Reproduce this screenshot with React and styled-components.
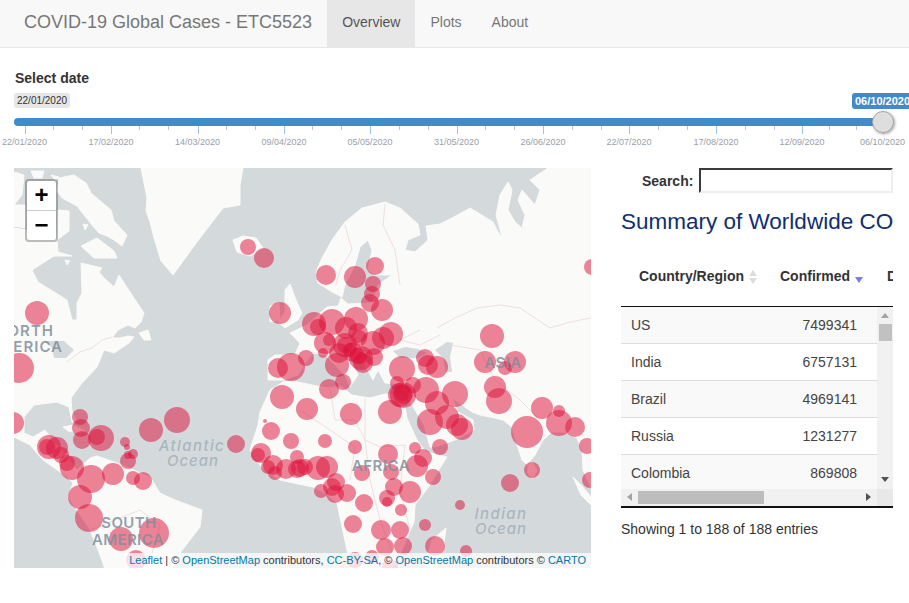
import React from "react";
import styled, { createGlobalStyle } from "styled-components";

const Global = createGlobalStyle`
  html, body { margin: 0; padding: 0; overflow: hidden; background: #fff; }
  body { font-family: "Liberation Sans", Arial, sans-serif; font-size: 14px; color: #333; }
`;

const Page = styled.div`width: 909px; height: 603px; overflow: hidden;`;

const Navbar = styled.nav`
  height: 47px; display: flex; background: #f8f8f8; border-bottom: 1px solid #e7e7e7; padding-left: 24px;
`;
const Brand = styled.div`font-size: 18px; line-height: 44px; color: #777; margin-right: 15px; white-space: nowrap;`;
const NavItem = styled.a`
  padding: 0 15px; line-height: 44px; font-size: 14px;
  color: ${p => (p.$active ? "#555" : "#777")};
  background: ${p => (p.$active ? "#e7e7e7" : "transparent")};
`;

const SliderBlock = styled.section`padding: 22px 0 0 14px;`;
const SliderLabel = styled.div`font-weight: 700; font-size: 14px; line-height: 16px; margin-left: 1px; color: #333;`;
const SliderBox = styled.div`position: relative; height: 76px; width: 895px;`;
const Bubble = styled.span`
  position: absolute; top: 7px; border-radius: 3px; white-space: nowrap; height: 15px; line-height: 15px;
  ${p => p.$max
    ? "left: 838px; background: #428bca; color: #fff; font-weight: 700; font-size: 11px; padding: 0 3px; height: 16px; line-height: 16px;"
    : "left: 0; background: #e6e6e6; color: #333; font-size: 10px; padding: 0 3px;"}
`;
const Track = styled.div`position: absolute; left: 0; top: 32px; width: 869px; height: 8px; background: #428bca; border-radius: 4px 0 0 4px;`;
const Handle = styled.div`
  position: absolute; left: 858px; top: 25px; width: 22px; height: 22px; box-sizing: border-box;
  border-radius: 50%; background: #dedede; border: 1px solid #aaa; box-shadow: 1px 1px 3px rgba(0,0,0,.35);
`;
const Tick = styled.i`
  position: absolute; top: 40px; width: 1px; height: ${p => (p.$major ? 8 : 4)}px;
  background: ${p => (p.$major ? "#9cc4e6" : "#c4c7ca")};
`;
const TickLabel = styled.span`
  position: absolute; top: 50px; width: 60px; margin-left: -30px; text-align: center; font-size: 9px; line-height: 12px; color: #99a0a6;
`;

const Content = styled.main`display: flex; padding: 6px 0 0 14px;`;
const MapBox = styled.div`position: relative; width: 577px; height: 400px; overflow: hidden; background: #d4dadc; flex: none;`;
const MapSvg = styled.svg`display: block;`;
const ZoomBar = styled.div`
  position: absolute; left: 11px; top: 11px; width: 29px; border: 2px solid rgba(0,0,0,.25); border-radius: 4px;
  background: #fff; background-clip: padding-box;
`;
const ZoomBtn = styled.div`
  height: 29px; line-height: 28px; text-align: center; font-size: 24px; font-weight: 700; color: #000;
  font-family: "Liberation Sans", sans-serif;
  &:first-child { border-bottom: 1px solid #ccc; }
`;
const Attribution = styled.div`
  position: absolute; right: 0; bottom: 0; height: 15px; padding: 0 5px; line-height: 15px; font-size: 11px; color: #333;
  background: rgba(255,255,255,.75); white-space: nowrap;
`;
const MapLink = styled.a`color: #0078a8;`;
const MapLabel = styled.text`
  font-family: Inter, "Open Sans", sans-serif; font-size: ${p => p.$size || 15}px;
  font-weight: ${p => (p.$italic ? 500 : 600)};
  fill: ${p => p.$fill || "#7f8f9c"}; letter-spacing: ${p => p.$ls ?? 1}px;
  font-style: ${p => (p.$italic ? "italic" : "normal")};
  fill-opacity: .85;
`;

const Side = styled.aside`width: 272px; margin-left: 30px; flex: none;`;
const SearchRow = styled.label`display: flex; align-items: center; height: 25px; padding-left: 21px; font-weight: 700; gap: 6px;`;
const SearchInput = styled.input`
  width: 194px; height: 25px; box-sizing: border-box; padding: 0; border: 2px inset #999; background: #fff;
  border-color: #8f8f8f #eee #eee #8f8f8f;
`;
const Title = styled.h3`
  margin: 15px 0 0; font-size: 22.5px; font-weight: 400; line-height: 28px; color: #0f2f70; white-space: nowrap; overflow: hidden;
`;
const HeaderTable = styled.table`
  margin-top: 10px; table-layout: fixed; width: 292px; border-collapse: collapse; 
`;
const TableClip = styled.div`width: 272px; overflow: hidden; border-bottom: 1px solid #111;`;
const Th = styled.th`
  height: 60px; padding: 0 0 0 ${p => p.$pad}px; text-align: left; font-size: 14px; font-weight: 700; color: #333; white-space: nowrap;
  box-sizing: border-box;
`;
const SortPair = styled.svg`display: inline-block; vertical-align: -3px; margin-left: ${p => p.$ml}px;`;
const ScrollGrid = styled.div`
  display: grid; grid-template-columns: 256px 16px; grid-template-rows: 182px 17px; border-bottom: 2px solid #111; width: 272px;
`;
const BodyClip = styled.div`overflow: hidden; background: #fff;`;
const BodyTable = styled.table`table-layout: fixed; width: 256px; border-collapse: collapse;`;
const Row = styled.tr`
  background: ${p => (p.$odd ? "#f9f9f9" : "#fff")};
  &:first-child td { height: 36px; }
`;
const Td = styled.td`
  height: 37px; padding: 0 ${p => (p.$num ? "20px" : "10px")} 0 10px; box-sizing: border-box; border-bottom: 1px solid #ddd;
  font-size: 14px; color: #444; text-align: ${p => (p.$num ? "right" : "left")};
`;
const VBar = styled.div`position: relative; background: #f1f1f1;`;
const HBar = styled.div`position: relative; background: #f1f1f1;`;
const Corner = styled.div`background: #e8e8e8;`;
const VThumb = styled.div`position: absolute; left: 2px; top: 17px; width: 13px; height: 17px; background: #c1c1c1;`;
const HThumb = styled.div`position: absolute; left: 17px; top: 2px; width: 126px; height: 13px; background: #bdbdbd;`;
const Arrow = styled.svg`position: absolute; left: ${p => p.$x}px; top: ${p => p.$y}px;`;
const Footer = styled.div`margin-top: 13px; font-size: 14px; line-height: 16px; color: #333;`;

const majors = [
  [10.5, "22/01/2020"], [97, "17/02/2020"], [183.5, "14/03/2020"], [270, "09/04/2020"], [356, "05/05/2020"],
  [442.5, "31/05/2020"], [529, "26/06/2020"], [615, "22/07/2020"], [702, "17/08/2020"], [788, "12/09/2020"], [868.5, "06/10/2020"],
];
const minors = [39, 68, 125, 154, 212, 241, 298, 327, 385, 414, 471, 500, 558, 587, 644, 673, 731, 760, 815, 842];

const land = [
  "-10,228 14,228 40,232 57,240 58,252 72,256 54,256 32,270 38,282 46,287 67,300 72,320 77,320 77,303 82,293 81,263 102,268 99,272 104,278 114,287 119,275 130,292 144,313 141,322 135,328 128,325 118,330 112,338 120,338 128,336 134,337 129,343 114,353 104,350 97,367 82,383 71,398 72,412 76,420 72,422 69,407 57,402 34,405 24,417 24,433 33,437 45,430 50,437 53,443 60,448 77,470 90,458 97,456 117,463 150,477 160,493 175,500 202,510 200,527 180,553 172,568 170,575 107,575 100,555 90,530 68,497 73,483 67,477 53,467 43,460 30,445 14,437 -10,430",
  "59,178 74,175 86,183 91,193 111,210 114,221 127,235 122,246 114,240 107,236 99,233 92,225 77,206 62,198 57,191",
  "81,246 97,238 114,251 117,258 94,258",
  "57,240 58,210 69,211 69,231",
  "83,224 88,225 85,230",
  "14,172 24,175 22,195 14,205",
  "31,171 44,171 42,178 34,178",
  "51,175 59,177 55,180",
  "14,205 25,205 25,228 14,226",
  "65,260 70,261 67,265",
  "141,168 243,168 240,185 240,205 223,208 210,225 197,242 173,275 161,261 154,238 150,222 146,211 147,198",
  "233,240 243,236 256,238 263,248 250,256 237,252",
  "285,290 290,284 296,300 302,313 298,320 285,328 278,322 285,312",
  "270,306 279,303 280,320 270,322",
  "139,333 148,330 151,340 144,340",
  "63,427 73,425 85,431 78,433 68,431",
  "318,283 316,272 322,258 332,240 345,222 362,208 385,202 400,208 418,224 420,235 408,240 405,250 415,252 428,240 426,226 440,224 452,218 470,208 480,214 493,222 498,232 502,237 496,215 500,195 508,182 512,190 508,210 515,222 522,228 525,215 518,200 522,190 535,205 540,190 530,180 545,170 548,168 600,168 600,490 591,488 583,470 582,450 577,438 565,432 552,432 543,440 535,455 527,465 522,460 517,445 512,427 503,420 495,418 480,415 472,412 462,405 452,398 458,412 473,420 474,430 455,440 435,447 430,447 424,425 412,405 405,393 403,385 385,383 378,370 373,380 365,365 357,358 345,345 358,375 350,387 345,375 330,360 325,355 313,353 305,363 298,375 283,380 268,380 268,360 275,355 295,355 300,343 290,333 307,325 327,307 338,306 341,298 348,304 372,303 378,285 392,275 375,275 368,270 372,250 368,240 360,247 355,265 345,285 342,297 332,292",
  "260,412 270,390 283,382 293,381 312,385 328,388 340,386 352,395 370,398 385,394 403,395 407,418 417,440 426,452 447,457 440,468 430,485 415,505 414,522 402,550 393,568 393,575 355,575 348,555 342,527 337,503 325,493 313,487 298,484 280,480 262,468 250,450 258,425",
  "573,477 582,486 591,497 591,505 581,495",
  "528,466 532,462 537,470 533,478 528,474",
  "446,528 442,560 432,572 426,560 432,540",
];
const water = [
  "393,351 405,347 418,349 427,353 418,358 400,358",
  "435,350 447,342 453,343 450,357 452,372 446,372 443,358",
  "44,341 64,341 74,350 66,358 54,358 52,348",
];
const borders = [
  "67,362 80,352 92,348 102,340 112,337",
  "437,328 455,318 477,308 500,305 520,308 535,318 550,328 570,322 591,318",
  "345,225 352,250 340,270 336,285",
  "385,204 383,225 395,250 400,285",
  "330,388 335,420 355,420 365,440 380,447 405,445",
  "300,410 330,430 355,447 350,480",
  "365,398 365,440 370,480 380,520 395,560",
  "405,445 400,490 410,530",
  "90,530 115,520 140,510 160,525 150,560",
  "450,345 480,350 495,380 520,400 540,420",
  "420,330 400,340 420,345 440,335",
];
const circles = [
  [248,247,8],[264,258,10],[280,313,11],[37,313,12],[19,368,15],[13,423,11],[278,368,10],[291,367,14],
  [326,275,10],[355,277,11],[375,266,9],[373,284,8],[372,294,8],[370,303,9],[382,310,11],[314,324,12],[332,322,13],[356,319,12],[318,327,8],[346,328,11],[358,333,10],[391,334,12],[383,338,11],[373,343,12],[325,343,11],[329,340,6],[359,338,8],[345,345,12],[339,353,10],[323,353,5],[353,352,10],[361,358,12],[374,357,9],[363,363,10],[337,365,12],[306,358,8],[492,336,12],[425,358,9],[402,369,13],[428,365,10],[437,367,11],[485,362,11],[515,362,11],[505,368,7],[592,267,8],
  [345,345,8],[350,350,7],[358,356,8],[361,358,6],[403,394,10],[402,393,8],
  [329,389,10],[343,382,8],[307,409,11],[351,414,11],[390,412,12],[397,383,7],[403,395,13],[400,395,12],[413,385,8],[426,390,13],[455,394,13],[437,403,12],[430,422,13],[447,417,12],[457,425,11],[462,429,11],[495,387,11],[499,401,13],[542,408,11],[559,411,6],[527,432,16],[559,423,13],[575,427,10],[587,446,8],[325,441,7],[355,447,7],[388,454,10],[415,448,6],[440,447,8],[423,458,9],[417,466,11],[391,472,8],[362,473,8],[433,477,8],[318,468,12],[327,467,11],[305,467,8],[300,468,9],[336,482,9],[332,487,9],[321,491,7],[335,494,9],[347,493,9],[364,503,9],[394,487,9],[410,492,11],[387,498,8],[387,502,5],[401,510,6],[353,524,9],[381,530,10],[400,530,9],[385,547,9],[403,546,9],[435,546,10],[425,525,6],[460,505,5],[466,551,6],[510,483,9],[532,470,8],[590,480,8],[355,560,8],[390,567,8],[372,557,7],
  [80,417,8],[81,428,9],[82,440,9],[101,438,13],[97,437,8],[151,430,12],[177,420,13],[236,444,9],[125,442,5],[127,447,3],[133,454,5],[128,455,4],[128,461,8],[271,431,9],[265,421,2],[291,441,8],[261,453,10],[258,455,7],[49,447,12],[57,448,11],[47,447,8],[61,455,8],[67,463,8],[72,468,12],[91,479,14],[113,474,11],[133,478,7],[143,481,9],[80,497,12],[89,518,14],[121,539,12],[154,533,15],[136,560,10],[273,465,10],[268,467,7],[275,473,7],[286,469,10],[297,469,9],[297,457,7],[282,397,12],
];
const rows = [["US", "7499341"], ["India", "6757131"], ["Brazil", "4969141"], ["Russia", "1231277"], ["Colombia", "869808"]];

const WorldMap = () => (
  <MapSvg width="577" height="400" viewBox="14 168 577 400">
    {land.map((p, i) => <polygon key={i} points={p} fill="#fafaf8" stroke="#fafaf8" strokeWidth="1" strokeLinejoin="round" />)}
    {water.map((p, i) => <polygon key={i} points={p} fill="#d4dadc" />)}
    {borders.map((p, i) => <polyline key={i} points={p} fill="none" stroke="#f0dfe0" strokeWidth="1" />)}
    {circles.map(([x, y, r], i) => <circle key={i} cx={x} cy={y} r={r} fill="#dc143c" fillOpacity=".52" />)}
    <MapLabel x="54" y="336" textAnchor="end">NORTH</MapLabel>
    <MapLabel x="63" y="352" textAnchor="end">AMERICA</MapLabel>
    <MapLabel x="129" y="528" textAnchor="middle" $ls={0.4}>SOUTH</MapLabel>
    <MapLabel x="128" y="545" textAnchor="middle" $ls={0.4}>AMERICA</MapLabel>
    <MapLabel x="381" y="471" textAnchor="middle" $ls={0.5}>AFRICA</MapLabel>
    <MapLabel x="503" y="368" textAnchor="middle" $ls={0.5}>ASIA</MapLabel>
    <MapLabel x="192" y="451" textAnchor="middle" $italic $fill="#a3afb7" $ls={1.4}>Atlantic</MapLabel>
    <MapLabel x="193" y="466" textAnchor="middle" $fill="#a3afb7" $ls={1} $italic>Ocean</MapLabel>
    <MapLabel x="501" y="519" textAnchor="middle" $fill="#a3afb7" $ls={1.4} $italic>Indian</MapLabel>
    <MapLabel x="501" y="534" textAnchor="middle" $fill="#a3afb7" $ls={1} $italic>Ocean</MapLabel>
  </MapSvg>
);

const GreySort = () => (
  <SortPair width="8" height="14" viewBox="0 0 8 14" $ml={5}>
    <path d="M4 0 8 6H0Z M0 8H8L4 14Z" fill="#dcdcdc" />
  </SortPair>
);
const BlueSort = () => (
  <SortPair width="8" height="14" viewBox="0 0 8 14" $ml={5}>
    <path d="M0 7H8L4 13Z" fill="#7b7be0" />
  </SortPair>
);

export default function App() {
  return (
    <Page>
      <Global />
      <Navbar>
        <Brand>COVID-19 Global Cases - ETC5523</Brand>
        <NavItem $active>Overview</NavItem>
        <NavItem>Plots</NavItem>
        <NavItem>About</NavItem>
      </Navbar>
      <SliderBlock>
        <SliderLabel>Select date</SliderLabel>
        <SliderBox>
          <Bubble>22/01/2020</Bubble>
          <Bubble $max>06/10/2020</Bubble>
          <Track />
          {minors.map(x => <Tick key={x} style={{ left: x }} />)}
          {majors.map(([x, t]) => <Tick key={t} $major style={{ left: x }} />)}
          {majors.map(([x, t]) => <TickLabel key={t} style={{ left: x }}>{t}</TickLabel>)}
          <Handle />
        </SliderBox>
      </SliderBlock>
      <Content>
        <MapBox>
          <WorldMap />
          <ZoomBar>
            <ZoomBtn>+</ZoomBtn>
            <ZoomBtn>−</ZoomBtn>
          </ZoomBar>
          <Attribution>
            <MapLink>Leaflet</MapLink> | © <MapLink>OpenStreetMap</MapLink> contributors, <MapLink>CC-BY-SA</MapLink>, © <MapLink>OpenStreetMap</MapLink> contributors © <MapLink>CARTO</MapLink>
          </Attribution>
        </MapBox>
        <Side>
          <SearchRow>Search:<SearchInput /></SearchRow>
          <Title>Summary of Worldwide COVID-19 Cases</Title>
          <TableClip>
            <HeaderTable>
              <colgroup><col width="149" /><col width="97" /><col width="46" /></colgroup>
              <thead>
                <tr>
                  <Th $pad={18}>Country/Region<GreySort /></Th>
                  <Th $pad={10}>Confirmed<BlueSort /></Th>
                  <Th $pad={20}>Deaths</Th>
                </tr>
              </thead>
            </HeaderTable>
          </TableClip>
          <ScrollGrid>
            <BodyClip>
              <BodyTable>
                <colgroup><col width="149" /><col width="107" /></colgroup>
                <tbody>
                  {rows.map(([c, n], i) => (
                    <Row key={c} $odd={i % 2 === 0}>
                      <Td>{c}</Td>
                      <Td $num>{n}</Td>
                    </Row>
                  ))}
                </tbody>
              </BodyTable>
            </BodyClip>
            <VBar>
              <Arrow $x={4} $y={6} width="8" height="5" viewBox="0 0 8 5"><path d="M4 0 8 5H0Z" fill="#a3a3a3" /></Arrow>
              <VThumb />
              <Arrow $x={4} $y={170} width="8" height="5" viewBox="0 0 8 5"><path d="M0 0H8L4 5Z" fill="#505050" /></Arrow>
            </VBar>
            <HBar>
              <Arrow $x={6} $y={4} width="5" height="8" viewBox="0 0 5 8"><path d="M5 0V8L0 4Z" fill="#a3a3a3" /></Arrow>
              <HThumb />
              <Arrow $x={245} $y={4} width="5" height="8" viewBox="0 0 5 8"><path d="M0 0V8L5 4Z" fill="#505050" /></Arrow>
            </HBar>
            <Corner />
          </ScrollGrid>
          <Footer>Showing 1 to 188 of 188 entries</Footer>
        </Side>
      </Content>
    </Page>
  );
}
